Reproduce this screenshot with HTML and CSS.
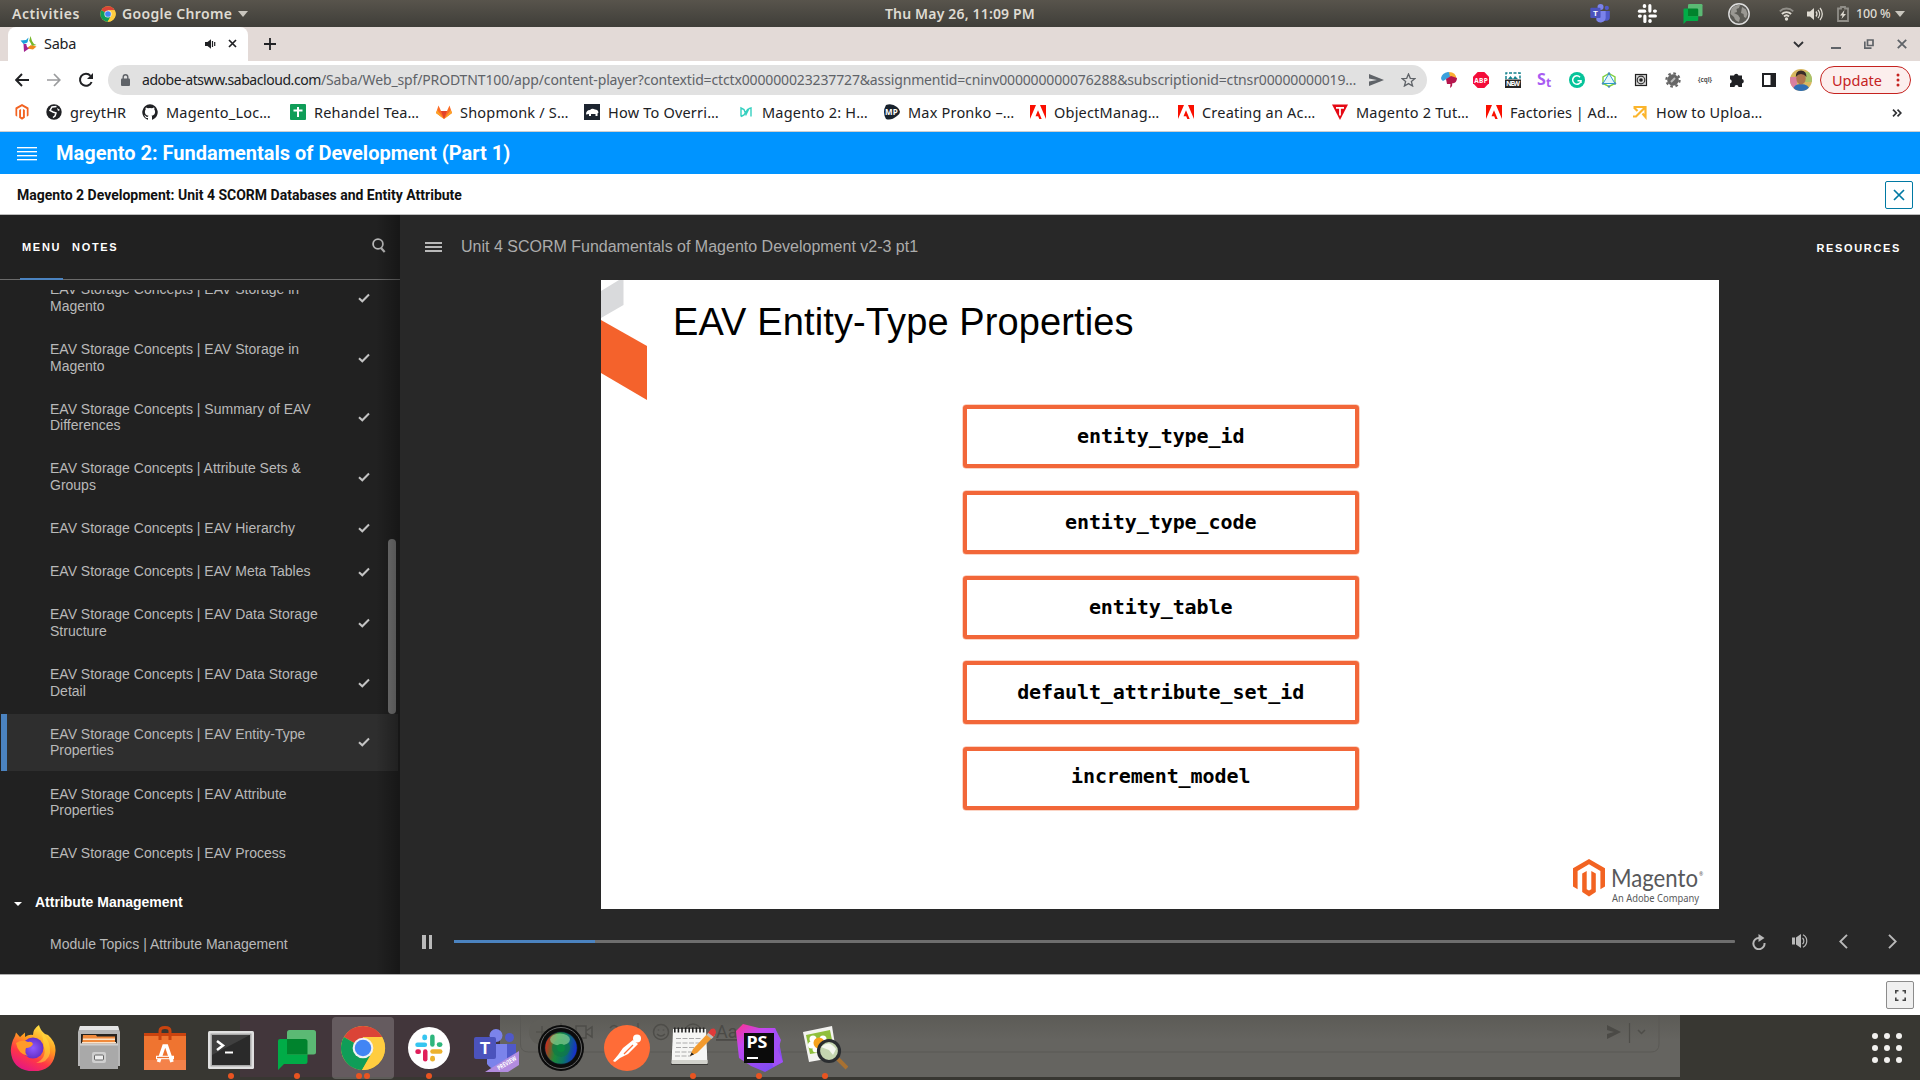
FILE: index.html
```html
<!DOCTYPE html>
<html lang="en">
<head>
<meta charset="utf-8">
<title>Saba</title>
<link rel="stylesheet" href="styles.css">
</head>
<body>
<svg class="defs" width="0" height="0">
  <symbol id="chrome" viewBox="0 0 48 48">
    <circle cx="24" cy="24" r="23" fill="#fc3"/>
    <path d="M24 24 4.100 12.500A23 23 0 0 1 44 12.500H24z" fill="#db4437"/>
    <path d="M24 24 4.100 12.500A23 23 0 0 0 23 47L33 29z" fill="#0f9d58"/>
    <path d="M24 12.500H44A23 23 0 0 1 23 47L34 29z" fill="#ffcd40"/>
    <circle cx="24" cy="24" r="10.800" fill="#f1f1f1"/>
    <circle cx="24" cy="24" r="8.600" fill="#4285f4"/>
  </symbol>
  <symbol id="magento" viewBox="0 0 32 38">
    <path d="M16 0 32 9.200V27.600L27.400 30.200V11.900L16 5.300 4.600 11.900V30.200L0 27.600V9.200z" fill="#f26322"/>
    <path d="M18.300 30.200 16 31.600 13.700 30.200V11.900L9.200 14.500V32.900L16 37.500 22.800 32.900V14.500L18.300 11.900z" fill="#f26322"/>
  </symbol>
  <symbol id="adobe" viewBox="0 0 16 16"><path d="M0 1h6L0 15zM16 1h-6l6 14zM8 6.200l3.700 8.800H9.300L8.200 12.200H5.500z" fill="#fa0f00"/></symbol>
  <symbol id="check" viewBox="0 0 12 10"><path d="M1 5.200 4.300 8.300 11 1.500" fill="none" stroke="#c4c4c4" stroke-width="2"/></symbol>
  <symbol id="slack" viewBox="0 0 24 24">
    <g class="sk-b"><rect x="1" y="7.500" width="9.500" height="3.600" rx="1.800"/><rect x="6.600" y="1.200" width="3.900" height="4.600" rx="1.900"/></g>
    <g class="sk-g"><rect x="12.900" y="1.200" width="3.600" height="9.800" rx="1.800"/><rect x="18.200" y="7.300" width="4.600" height="3.800" rx="1.900"/></g>
    <g class="sk-y"><rect x="13" y="13" width="9.800" height="3.600" rx="1.800"/><rect x="12.900" y="18.200" width="3.900" height="4.600" rx="1.900"/></g>
    <g class="sk-r"><rect x="7.200" y="13" width="3.600" height="9.800" rx="1.800"/><rect x="1" y="13" width="4.600" height="3.800" rx="1.900"/></g>
  </symbol>
  <symbol id="chat" viewBox="0 0 38 40">
    <path d="M2 9H27a2.500 2.500 0 0 1 2.500 2.500V31.500A2.500 2.500 0 0 1 27 34H6L0 40V11a2 2 0 0 1 2-2z" fill="#00ac47"/>
    <path d="M11.500 0H35.500A2.500 2.500 0 0 1 38 2.500V22a2.500 2.500 0 0 1-2.500 2.500H9V2.500A2.500 2.500 0 0 1 11.500 0z" fill="#5bb974"/>
    <path d="M9 9H27a2.500 2.500 0 0 1 2.500 2.500V24.500H9z" fill="#00832d"/>
  </symbol>
  <symbol id="teams" viewBox="0 0 46 43">
    <circle cx="22" cy="6.500" r="6.500" fill="#7b83eb"/><circle cx="35.500" cy="8.500" r="4.500" fill="#5059c9"/>
    <path d="M28 15H42V28a8 8 0 0 1-8 8H28z" fill="#5059c9"/>
    <path d="M13 15H33V30a11 11 0 0 1-20 5z" fill="#7b83eb"/>
    <rect y="8" width="22" height="22" rx="2" fill="#4b53bc"/>
    <text x="11" y="25" text-anchor="middle" class="teams-t">T</text>
  </symbol>
</svg>

<header class="topbar">
  <div class="top-left">
    <span class="activities">Activities</span>
    <svg width="16" height="16"><use href="#chrome"/></svg>
    <span class="appname">Google Chrome</span>
    <i class="caret"></i>
  </div>
  <span class="clock">Thu May 26, 11:09 PM</span>
  <div class="tray">
    <svg class="t-teams" width="22" height="20"><use href="#teams"/></svg>
    <svg class="mono t-slack" width="21" height="21"><use href="#slack"/></svg>
    <svg class="t-chat" width="20" height="20"><use href="#chat"/></svg>
    <svg class="t-globe" width="22" height="22" viewBox="0 0 22 22"><circle cx="11" cy="11" r="10.200" fill="#5b5a55" stroke="#dedede" stroke-width="1.400"/><path d="M3.500 5.500Q7 1.500 12 2L11 5 8.500 6 9 9 6 10 10 12 12 15 11 19Q7 18 6 14L2.500 11zM14 4l4 2.500 1.500 4.500-1.500 4-2-1-.5-3-2.500-1 .5-3z" fill="#9a9893"/></svg>
    <svg class="t-wifi" width="15" height="14" viewBox="0 0 15 14"><g fill="none" stroke-width="1.900"><path d="M.8 4.300a9.500 9.500 0 0 1 13.400 0" stroke="#908e88"/><path d="M2.900 7a6.500 6.500 0 0 1 9.200 0" stroke="#dfdbd2"/><path d="M5 9.500a3.600 3.600 0 0 1 5 0" stroke="#dfdbd2"/></g><circle cx="7.500" cy="12" r="1.700" fill="#dfdbd2"/></svg>
    <svg class="t-vol" width="16" height="14" viewBox="0 0 16 14"><path d="M0 4.500H3L7 1V13L3 9.500H0z" fill="#dfdbd2"/><path d="M9 4.500a4 4 0 0 1 0 5M11 2.800a6.500 6.500 0 0 1 0 8.400M13 1a9 9 0 0 1 0 12" fill="none" stroke="#dfdbd2" stroke-width="1.300"/></svg>
    <svg class="t-bat" width="12" height="16" viewBox="0 0 12 16"><path d="M4 1h4v1.500h3V15H1V2.500h3z" fill="none" stroke="#908e88" stroke-width="1.800"/><path d="M7.500 4 3 9.500H5.500L4.500 13 9 8H6.500z" fill="#dfdbd2"/></svg>
    <span class="pct">100 %</span>
    <i class="caret"></i>
  </div>
</header>

<div class="tabstrip">
  <div class="tab">
    <svg width="17" height="16" viewBox="0 0 17 16"><path d="M.5 4.500 6 4 8.500 1.500 7.500 6.500 3.500 8z" fill="#1b9fdb"/><path d="M10.500 0 12 5 14 8 16.500 9 12 10 9 5.500z" fill="#76b82a"/><path d="M16.500 10.500 13 13.500 7 12.500 10 9z" fill="#f08a1d"/><path d="M4 16 3.500 8 6.500 8 7 11 9 12.500z" fill="#a3238e"/><path d="M9.500 5 11.500 8.500 9 10.500 6.500 9.500 7 7z" fill="#fff"/></svg>
    <span class="tab-title">Saba</span>
    <svg class="tab-sound" width="11" height="10" viewBox="0 0 11 10"><path d="M0 3H2.500L6 .3V9.700L2.500 7H0z" fill="#202124"/><path d="M7.500 2v6M9.700 3v4" stroke="#202124" stroke-width="1.200"/></svg>
    <svg width="9" height="9" viewBox="0 0 9 9"><path d="M1 1l7 7M8 1 1 8" stroke="#202124" stroke-width="1.700"/></svg>
  </div>
  <svg class="newtab" width="12" height="12" viewBox="0 0 12 12"><path d="M6 0v12M0 6h12" stroke="#202124" stroke-width="1.800"/></svg>
  <div class="winctl">
    <svg width="11" height="7" viewBox="0 0 11 7"><path d="M1 1l4.500 4.500L10 1" fill="none" stroke="#303134" stroke-width="1.800"/></svg>
    <svg width="10" height="10" viewBox="0 0 10 10"><path d="M0 9h10" stroke="#5f6368" stroke-width="2"/></svg>
    <svg width="10" height="10" viewBox="0 0 10 10"><path d="M3.500 1H9v5.500H3.500zM.8 2.500v6.700H7.500" fill="none" stroke="#5f6368" stroke-width="1.700"/></svg>
    <svg width="10" height="10" viewBox="0 0 10 10"><path d="M.8.8l8.400 8.400M9.200.8.8 9.200" stroke="#5f6368" stroke-width="1.800"/></svg>
  </div>
</div>

<div class="toolbar">
  <svg class="nav" width="14" height="14" viewBox="0 0 14 14"><path d="M14 7H1.500M7 1 1.200 7 7 13" fill="none" stroke="#202124" stroke-width="1.900"/></svg>
  <svg class="nav" width="14" height="14" viewBox="0 0 14 14"><path d="M0 7h12.500M7 1l5.800 6L7 13" fill="none" stroke="#9a9b9d" stroke-width="1.700"/></svg>
  <svg class="nav reload" width="16" height="16" viewBox="0 0 16 16"><path d="M13.600 10A6 6 0 1 1 12.500 3.800" fill="none" stroke="#202124" stroke-width="2"/><path d="M15 1v6H9z" fill="#202124"/></svg>
  <div class="omnibox">
    <svg width="9" height="12" viewBox="0 0 9 12"><path d="M2.200 5V3a2.300 2.300 0 0 1 4.600 0v2" fill="none" stroke="#5f6368" stroke-width="1.400"/><rect y="4.500" width="9" height="7.500" rx="1" fill="#5f6368"/></svg>
    <span class="host">adobe-atsww.sabacloud.com</span><span class="path">/Saba/Web_spf/PRODTNT100/app/content-player?contextid=ctctx000000023237727&amp;assignmentid=cninv000000000076288&amp;subscriptionid=ctnsr00000000019…</span>
    <svg width="15" height="12" viewBox="0 0 15 12"><path d="M0 0 15 6 0 12V7.500L8 6 0 4.500z" fill="#5f6368"/></svg>
    <svg class="star" width="15" height="14" viewBox="0 0 15 14"><path d="M7.500 1 9.300 5.300 14 5.600 10.400 8.600 11.600 13 7.500 10.600 3.400 13 4.600 8.600 1 5.600 5.700 5.300z" fill="none" stroke="#5f6368" stroke-width="1.300"/></svg>
  </div>
  <div class="exts">
    <svg viewBox="0 0 16 16"><path d="M0 6Q1 1 7 0q3 0 2 5L2 9Q0 8 0 6z" fill="#3aa0dc"/><path d="M8 0q7 0 7.500 7L9 5z" fill="#fbb033"/><path d="M5 7l5-3 6 2q0 5-5 5.500Q12 14 9 16L9.500 12H6z" fill="#b5164e"/></svg>
    <svg viewBox="0 0 16 16"><path d="M4.700 0h6.600L16 4.700v6.600L11.300 16H4.700L0 11.300V4.700z" fill="#f40d3a"/><text x="8" y="10.700" text-anchor="middle" textLength="13.500" class="abp">ABP</text></svg>
    <svg viewBox="0 0 16 16"><path d="M1 7V1h14v6" fill="none" stroke="#13818d" stroke-width="1.500" stroke-dasharray="3 1.500"/><path d="M3 7l2.500-3L8 7l2-3 3 3z" fill="#13818d"/><rect y="7.500" width="16" height="8.500" fill="#262626"/><text x="8" y="14.300" text-anchor="middle" textLength="14" class="newx">NEW</text></svg>
    <svg viewBox="0 0 16 16"><text x="0" y="13" class="st1">S</text><text x="9" y="15" class="st2">t</text></svg>
    <svg viewBox="0 0 16 16"><circle cx="8" cy="8" r="8" fill="#07c39a"/><path d="M11 5.200A4.200 4.200 0 1 0 12 8.800H8.500M12 8.500v2.500" fill="none" stroke="#fff" stroke-width="1.500"/></svg>
    <svg viewBox="0 0 16 16"><path d="M8 1.500 14 5v6.500L8 14.500 2 11.500V5z" fill="none" stroke="#7fcf3f" stroke-width="1.400"/><path d="M8 1.500 14 11.500H2z" fill="#e3f4fb" stroke="#2b9bd0"/><g fill="#4a90b8"><circle cx="8" cy="1.500" r="1.200"/><circle cx="14" cy="11.500" r="1.200"/><circle cx="2" cy="11.500" r="1.200"/><circle cx="8" cy="14.600" r="1.200"/></g></svg>
    <svg viewBox="0 0 16 16"><rect x="2.500" y="2.500" width="11" height="11" fill="#d8d8d8" stroke="#222" stroke-width="1.200"/><circle cx="8" cy="8" r="3.800" fill="none" stroke="#333" stroke-width="1.200"/><circle cx="8" cy="8" r="1.800" fill="#222"/></svg>
    <svg viewBox="0 0 16 16"><circle cx="8" cy="8" r="6.600" fill="none" stroke="#666" stroke-width="2.200" stroke-dasharray="2.600 2.600"/><circle cx="8" cy="8" r="5.800" fill="#666"/><path d="M6 10l4-4" stroke="#bbb" stroke-width="2"/></svg>
    <svg viewBox="0 0 16 16"><text x="8" y="10.300" text-anchor="middle" textLength="14" lengthAdjust="spacingAndGlyphs" class="cql">{cql}</text></svg>
    <svg viewBox="0 0 16 16"><path d="M1 3.500H5a2.300 2.300 0 0 1 4.500 0H13V7a2.300 2.300 0 0 1 0 4.500V15H9.500a2 2 0 0 0-4 0H1V11.500a2.200 2.200 0 0 0 0-4.300z" fill="#202124"/></svg>
    <svg viewBox="0 0 16 16"><path d="M2 2h12v12H2z" fill="none" stroke="#202124" stroke-width="2"/><path d="M9.500 2H14v12H9.500z" fill="#202124"/></svg>
  </div>
  <svg class="avatar" width="22" height="22" viewBox="0 0 22 22"><clipPath id="av"><circle cx="11" cy="11" r="11"/></clipPath><g clip-path="url(#av)"><rect width="22" height="22" fill="#d8b860"/><path d="M0 8h7v14H0z" fill="#d97fa0"/><path d="M14 3h8v10h-8z" fill="#a8c26a"/><path d="M3 22q0-7 8-7t9 7z" fill="#2f6fb5"/><ellipse cx="11" cy="9.500" rx="4.700" ry="6" fill="#b0764e"/><path d="M5.800 8Q5.500 1.500 11 1.500T16.500 8Q14 5 11 5T5.800 8z" fill="#3a2c28"/></g></svg>
  <div class="update">Update<svg width="4" height="14" viewBox="0 0 4 14"><g fill="#c5221f"><circle cx="2" cy="2" r="1.500"/><circle cx="2" cy="7" r="1.500"/><circle cx="2" cy="12" r="1.500"/></g></svg></div>
</div>

<nav class="bookmarks">
  <a class="bm b-mg"><svg viewBox="0 0 32 38"><use href="#magento"/></svg></a>
  <a class="bm b1"><svg viewBox="0 0 16 16"><circle cx="8" cy="8" r="7.700" fill="#202124"/><path d="M10.500 2.500 6 3 4 6.500 7 8l3 1-1 3-2 1.500" fill="none" stroke="#fff" stroke-width="1.500"/><path d="M11 4l3 2-2 1z" fill="#fff"/></svg>greytHR</a>
  <a class="bm b2"><svg viewBox="0 0 16 16"><path d="M8 .2a8 8 0 0 0-2.500 15.500c.4.100.5-.2.500-.4v-1.400c-2.200.5-2.700-1-2.700-1-.4-.9-.9-1.200-.9-1.200-.7-.5.100-.5.100-.5.800.100 1.200.8 1.200.8.700 1.200 1.900.9 2.300.7.100-.5.300-.9.500-1.100-1.800-.2-3.600-.9-3.600-3.900 0-.9.300-1.600.8-2.100-.1-.2-.4-1 .1-2.100 0 0 .7-.2 2.200.8a7.500 7.500 0 0 1 4 0c1.500-1 2.200-.8 2.200-.8.400 1.100.200 1.900.100 2.100.5.500.8 1.200.8 2.100 0 3-1.800 3.700-3.600 3.900.3.300.500.800.500 1.500v2.200c0 .200.100.500.500.400A8 8 0 0 0 8 .2z" fill="#202124"/></svg>Magento_Loc…</a>
  <a class="bm b3"><svg viewBox="0 0 16 16"><rect width="16" height="16" rx="1" fill="#0f9d58"/><path d="M8 3v10M3.500 6.500h9" stroke="#fff" stroke-width="2"/></svg>Rehandel Tea…</a>
  <a class="bm b4"><svg viewBox="0 0 16 16"><path d="M8 15 0 9 2.500 1.500 5 7h6l2.500-5.500L16 9z" fill="#fc6d26"/><path d="M8 15 5 7h6z" fill="#e24329"/><path d="M0 9 1.200 6 8 15zM16 9l-1.200-3L8 15z" fill="#fca326"/></svg>Shopmonk / S…</a>
  <a class="bm b5"><svg viewBox="0 0 16 16"><rect width="16" height="16" fill="#1d2530"/><path d="M2 10.500Q2 6 6 6q2-2 5-.5 3 0 3.500 3l-1 1V12h-2V10H7v2H5V10z" fill="#fff"/></svg>How To Overri…</a>
  <a class="bm b6"><svg viewBox="0 0 16 16"><path d="M3 12.500V4l3 1.500 2 5 3-6L13 4v8.500M3 12.500 6 11 10 5" fill="none" stroke="#35d0c0" stroke-width="1.400"/></svg>Magento 2: H…</a>
  <a class="bm b7"><svg viewBox="0 0 16 16"><path d="M2 1Q8-1 13 3q6 5 0 9-6 5-11 3-4-7 0-14z" fill="#18222d"/><text x="7.500" y="11" text-anchor="middle" class="mp">MP</text></svg>Max Pronko –…</a>
  <a class="bm b8"><svg viewBox="0 0 16 16"><use href="#adobe"/></svg>ObjectManag…</a>
  <a class="bm b9"><svg viewBox="0 0 16 16"><use href="#adobe"/></svg>Creating an Ac…</a>
  <a class="bm b10"><svg viewBox="0 0 16 16"><path d="M0 .5h16L8 16z" fill="#e50914"/><path d="M4 3.800h8M8 4v7.500" stroke="#fff" stroke-width="1.800"/></svg>Magento 2 Tut…</a>
  <a class="bm b11"><svg viewBox="0 0 16 16"><use href="#adobe"/></svg>Factories | Ad…</a>
  <a class="bm b12"><svg viewBox="0 0 16 16"><path d="M1.500 3H13.500V13L10.500 9.500M13 3.500 4 12.500H1M2 3.500 5.500 7" fill="none" stroke="#fbb52c" stroke-width="2.200"/></svg>How to Uploa…</a>
  <svg class="more" width="10" height="8" viewBox="0 0 10 8"><path d="M1 .7 4.300 4 1 7.300M5.500.7 8.800 4 5.500 7.300" fill="none" stroke="#303134" stroke-width="1.700"/></svg>
</nav>

<div class="coursebar">
  <div class="burger4"><i></i><i></i><i></i><i></i></div>
  <h1>Magento 2: Fundamentals of Development (Part 1)</h1>
</div>
<div class="unitbar">
  <h2>Magento 2 Development: Unit 4 SCORM Databases and Entity Attribute</h2>
  <button class="close"><svg width="12" height="12" viewBox="0 0 12 12"><path d="M1 1l10 10M11 1 1 11" stroke="#0079a3" stroke-width="1.700"/></svg></button>
</div>

<main class="player">
  <aside class="sidebar">
    <div class="side-tabs">
      <span class="stab active">MENU</span><span class="stab">NOTES</span>
      <svg width="14" height="15" viewBox="0 0 14 15"><circle cx="6" cy="6" r="4.900" fill="none" stroke="#b9b9b9" stroke-width="1.800"/><path d="M9 10l3.700 4" stroke="#b9b9b9" stroke-width="2.200"/></svg>
    </div>
    <div class="outline">
      <ul>
        <li><span>EAV Storage Concepts | EAV Storage in<br>Magento</span><svg><use href="#check"/></svg></li>
        <li><span>EAV Storage Concepts | EAV Storage in<br>Magento</span><svg><use href="#check"/></svg></li>
        <li><span>EAV Storage Concepts | Summary of EAV<br>Differences</span><svg><use href="#check"/></svg></li>
        <li><span>EAV Storage Concepts | Attribute Sets &amp;<br>Groups</span><svg><use href="#check"/></svg></li>
        <li><span>EAV Storage Concepts | EAV Hierarchy</span><svg><use href="#check"/></svg></li>
        <li><span>EAV Storage Concepts | EAV Meta Tables</span><svg><use href="#check"/></svg></li>
        <li><span>EAV Storage Concepts | EAV Data Storage<br>Structure</span><svg><use href="#check"/></svg></li>
        <li><span>EAV Storage Concepts | EAV Data Storage<br>Detail</span><svg><use href="#check"/></svg></li>
        <li class="current"><span>EAV Storage Concepts | EAV Entity-Type<br>Properties</span><svg><use href="#check"/></svg></li>
        <li><span>EAV Storage Concepts | EAV Attribute<br>Properties</span></li>
        <li><span>EAV Storage Concepts | EAV Process</span></li>
        <li class="section"><i></i><span>Attribute Management</span></li>
        <li><span>Module Topics | Attribute Management</span></li>
      </ul>
      <div class="thumb"></div>
    </div>
    <div class="edge"></div>
  </aside>
  <section class="stage">
    <div class="stage-head">
      <div class="burger3"><i></i><i></i><i></i></div>
      <span class="stage-title">Unit 4 SCORM Fundamentals of Magento Development v2-3 pt1</span>
      <span class="resources">RESOURCES</span>
    </div>
    <div class="slide">
      <svg class="decor" width="48" height="122" viewBox="0 0 48 122"><path d="M18 0H22.500V25L0 38V11z" fill="#d9dadc"/><path d="M0 40 46 66V120L0 93z" fill="#f4622c"/></svg>
      <h3>EAV Entity-Type Properties</h3>
      <div class="boxes">
        <div>entity_type_id</div>
        <div>entity_type_code</div>
        <div>entity_table</div>
        <div>default_attribute_set_id</div>
        <div class="last">increment_model</div>
      </div>
      <svg class="logo" width="132" height="48" viewBox="0 0 132 48"><use href="#magento" width="32" height="38"/><g fill="#58595b"><text x="38" y="28" textLength="87" lengthAdjust="spacingAndGlyphs" class="lg1">Magento</text><text x="126" y="17" class="lg3">®</text><text x="39" y="43" textLength="87" lengthAdjust="spacingAndGlyphs" class="lg2">An Adobe Company</text></g></svg>
    </div>
    <div class="controls">
      <div class="pause"><i></i><i></i></div>
      <div class="seek"><div class="played"></div></div>
      <svg class="c-replay" width="14" height="16" viewBox="0 0 14 16"><path d="M12.500 9A5.600 5.600 0 1 1 7 4" fill="none" stroke="#b9b9b9" stroke-width="2"/><path d="M6.500 0 12.500 4 6.500 8z" fill="#b9b9b9"/></svg>
      <svg class="c-vol" width="17" height="14" viewBox="0 0 17 14"><path d="M0 3.500H3v7H0zM4 3.500 9 0V14L4 10.500z" fill="#b9b9b9"/><path d="M10.500 4a4 4 0 0 1 0 6M11 .8a7 7 0 0 1 0 12.400" fill="none" stroke="#b9b9b9" stroke-width="1.200"/></svg>
      <svg class="c-prev" width="9" height="15" viewBox="0 0 9 15"><path d="M8 .8 1.300 7.500 8 14.200" fill="none" stroke="#b9b9b9" stroke-width="1.900"/></svg>
      <svg class="c-next" width="9" height="15" viewBox="0 0 9 15"><path d="M1 .8l6.700 6.700L1 14.200" fill="none" stroke="#b9b9b9" stroke-width="1.900"/></svg>
    </div>
  </section>
</main>

<div class="footer"><button class="full"><svg width="11" height="11" viewBox="0 0 11 11"><path d="M.8 3.500V.8H3.500M7.500.8h2.700v2.700M10.200 7.500v2.700H7.500M3.500 10.200H.8V7.500" fill="none" stroke="#444" stroke-width="1.600"/></svg></button></div>

<footer class="dock">
  <div class="backdrop"><i class="bk1"></i><i class="bk2"></i>
    <svg class="compose" width="1180" height="62" viewBox="0 0 1180 62"><g fill="none" stroke="#4e4d49" stroke-width="1.500"><path d="M20.500 0V29q0 8 8 8H1151q8 0 8-8V0" stroke="#5a5955" stroke-width="1"/><circle cx="42" cy="17" r="13" fill="#5f5e59" stroke="none"/><path d="M42 11v12M36 17h12M61 8v20M138 8v20M1129.500 8v20" stroke-width="1.200"/><path d="M76 11h10v12H76zM86 16l6-4v10l-6-4M110 13q4-5 8 0v8"/><circle cx="161" cy="17" r="7.500"/><path d="M157 19q4 4 8 0M158.500 14.500v1M163.500 14.500v1"/><circle cx="193" cy="17" r="8"/><path d="M1138 15l3.500 3.500L1145 15"/></g><path d="M1107 10 1121 17 1107 24V19L1114 17 1107 15z" fill="#4b4a46"/><text x="216" y="23" class="aa">Aa</text></svg>
  </div>
  <div class="apps">
    <div class="app"><svg width="46" height="46" viewBox="0 0 46 46"><defs><linearGradient id="ff" x1=".8" y1="0" x2=".3" y2="1"><stop offset="0" stop-color="#fff44f"/><stop offset=".4" stop-color="#ff9a1f"/><stop offset=".7" stop-color="#ff3647"/><stop offset="1" stop-color="#e31587"/></linearGradient><radialGradient id="fg"><stop offset="0" stop-color="#9059ff"/><stop offset="1" stop-color="#6532c8"/></radialGradient></defs><path d="M5 11 6 7.500 10 12 15 7.500 15 12Q19 9 23 10 23 4 29 0 30 5 35 9L38 10Q46 17 45.500 26 44 46 23 46.500 2 45 .8 26 1 18 5 11z" fill="url(#ff)"/><path d="M32 8Q41 16 40 28 38 38 26 38 37 33 34 22z" fill="#ffdf3a" opacity=".55"/><circle cx="23" cy="23" r="10.500" fill="url(#fg)"/><path d="M6 18Q12 14 18 17 22 16 23 19 21 23 16 23 14 28 18 31 8 29 6 18z" fill="#ff9a28"/></svg></div>
    <div class="app"><svg width="42" height="44" viewBox="0 0 42 44"><path d="M2 0H40L42 6V40H0V6z" fill="#b6b6b6"/><path d="M2 0H40L41 4H1z" fill="#e4e4e4"/><rect x="3" y="8" width="36" height="11" fill="#26231f"/><path d="M5 9H18l1 1.500H37V20H4z" fill="#f08a3c"/><path d="M5 12.500H37v1.500H5zM4 16H38v1.500H4z" fill="#fbe3c8"/><path d="M2 17.500H40V43H2z" fill="#a9a9a9"/><path d="M2 17.500H40v2H2z" fill="#cfcfcf"/><rect x="14" y="26" width="14" height="11" rx="2" fill="#cfcfcf"/><rect x="16.500" y="29" width="9" height="5" rx="1" fill="#eee" stroke="#666"/></svg></div>
    <div class="app"><svg width="42" height="44" viewBox="0 0 42 44"><path d="M0 7H42V12H0z" fill="#c9430f"/><path d="M0 10H42V44H0z" fill="#ef7430"/><path d="M0 34H42V44H0z" fill="#f4824a"/><path d="M16 14V5q0-3.500 5-3.500T26 5v9" fill="none" stroke="#c9430f" stroke-width="3"/><path d="M14.500 36 20 20h2.500L28 36M12 31.500H30" fill="none" stroke="#fff" stroke-width="3.600"/><path d="M13 31.500H25" stroke="#ef7430" stroke-width="1.300"/></svg></div>
    <div class="app"><svg class="down" width="46" height="38" viewBox="0 0 46 38"><rect width="46" height="38" rx="1.500" fill="#e0e0e0"/><rect x="2.500" y="2.500" width="41" height="33" fill="#a9a9a9"/><rect x="4" y="4" width="38" height="30" fill="#2a2a2a"/><path d="M4 4H42L4 24z" fill="#3f3f3f"/><path d="M9 10l6 4.500L9 19" fill="none" stroke="#fff" stroke-width="2.500"/><path d="M17 21.500h8" stroke="#fff" stroke-width="2"/></svg><i class="dot"></i></div>
    <div class="app"><svg class="down" width="38" height="40" viewBox="0 0 38 40"><use href="#chat"/></svg><i class="dot"></i></div>
    <div class="app on"><svg width="46" height="46"><use href="#chrome"/></svg><i class="dot two"></i></div>
    <div class="app"><svg width="42" height="42" viewBox="0 0 42 42"><circle cx="21" cy="21" r="21" fill="#fff"/><use href="#slack" x="6" y="6" width="30" height="30"/></svg><i class="dot"></i></div>
    <div class="app"><svg class="tm" width="46" height="43" viewBox="0 0 46 43"><use href="#teams"/><path d="M11 43 45 22V36L34 43z" fill="#b28ce0"/><text transform="translate(25 41.500) rotate(-31)" textLength="21" lengthAdjust="spacingAndGlyphs" class="prev">PREVIEW</text></svg></div>
    <div class="app"><svg width="46" height="46" viewBox="0 0 46 46"><defs><linearGradient id="ln" x1="0" y1=".4" x2="1" y2=".6"><stop offset="0" stop-color="#d02a1c"/><stop offset=".35" stop-color="#1d8a3a"/><stop offset=".65" stop-color="#0c7468"/><stop offset="1" stop-color="#1828d8"/></linearGradient></defs><circle cx="23" cy="23" r="23" fill="#0c0c0c"/><circle cx="23" cy="23" r="20.500" fill="none" stroke="#666" stroke-width="1"/><circle cx="23" cy="23" r="16.500" fill="#123"/><circle cx="23" cy="23" r="15.800" fill="url(#ln)"/><circle cx="23" cy="23" r="9" fill="#0f7a45" opacity=".7"/><ellipse cx="22" cy="14.500" rx="10" ry="6" fill="#9adf9c" opacity=".6"/><circle cx="23" cy="23" r="4" fill="#0b8a42"/></svg></div>
    <div class="app"><svg width="46" height="46" viewBox="0 0 46 46"><circle cx="23" cy="23" r="23" fill="#ff6c37"/><circle cx="33" cy="13.500" r="4" fill="#fff"/><path d="M29 15 34 19 24 29 16 33 11 37 9 36 14 30 19 23z" fill="#fff"/><path d="M20 29l9-9" stroke="#ff6c37" stroke-width="1.200"/></svg></div>
    <div class="app"><svg width="46" height="46" viewBox="0 0 46 46"><path d="M3 5H36L38 40H1z" fill="#3c3b38"/><path d="M3 4H36L37.500 38H1.500z" fill="#f6f6f4"/><path d="M2 35H37.500V39H1.500z" fill="#d2d2cc"/><path d="M4 5H36" stroke="#222" stroke-width="5" stroke-dasharray="1.600 2"/><path d="M6 13.500H31M6 18H30M6 22.500H27M5 27H24M5 31H21" stroke="#a9a9a9" stroke-width="1.200" stroke-dasharray="5 1.500"/><path d="M20 31 23 24 40 6 45 10 27 28z" fill="#f39a2d"/><path d="M38 8 41 4q5-2 5 4l-2.500 4z" fill="#e03a3a"/><path d="M36.500 10 38.500 8 43.500 12 41.500 14z" fill="#bcbcbc"/><path d="M20 31l1.500-3.500 2.500 2z" fill="#222"/></svg><i class="dot"></i></div>
    <div class="app"><svg width="48" height="48" viewBox="0 0 48 48"><defs><linearGradient id="ps" x1="0" y1="0" x2=".7" y2="1"><stop offset="0" stop-color="#ff318c"/><stop offset=".35" stop-color="#c247f0"/><stop offset="1" stop-color="#7b4df5"/></linearGradient></defs><path d="M1 7 8 0 24 4 40 4 44 18 48 38 30 48 16 42 4 34z" fill="url(#ps)"/><path d="M40 4 46 16 43 26 48 38 38 43 34 20z" fill="#a14ff5"/><rect x="9" y="9" width="30" height="30" fill="#0b0b0b"/><text x="11.500" y="24" textLength="21" lengthAdjust="spacingAndGlyphs" class="pst">PS</text><path d="M12 34h11" stroke="#fff" stroke-width="2"/></svg><i class="dot"></i></div>
    <div class="app"><svg width="46" height="46" viewBox="0 0 46 46"><path d="M1 7 30 1 35 32 7 37z" fill="#f3f3f0"/><path d="M4 10 28 5 32 25 8 29z" fill="#8fbf3c"/><g fill="#fff"><circle cx="11" cy="14" r="3.500"/><circle cx="9.500" cy="20" r="3.500"/><circle cx="14" cy="24" r="3.500"/><circle cx="21" cy="14" r="3.500"/></g><circle cx="17" cy="18" r="5.500" fill="#f6a11c"/><path d="M35 33 45 43" stroke="#a87132" stroke-width="4"/><circle cx="27" cy="26" r="10.500" fill="#c5d6b0" stroke="#2a2d30" stroke-width="3.200"/><path d="M19 22q8-8 15 2l-3 6-4-5z" fill="#f3f6ee"/></svg><i class="dot"></i></div>
  </div>
  <div class="grid"><i></i><i></i><i></i><i></i><i></i><i></i><i></i><i></i><i></i></div>
</footer>
</body>
</html>
```
FILE: styles.css
```css
* { box-sizing: border-box; }
body { margin: 0; width: 1920px; height: 1080px; overflow: hidden; display: flex; flex-direction: column; background: #fff; font-family: "Noto Sans", sans-serif; font-size: 14.5px; color: #202124; }
h1, h2, h3, ul { margin: 0; padding: 0; }
svg { display: block; flex: none; }
.defs { position: absolute; }
span, a, h1, h2, h3 { white-space: nowrap; }

/* desktop panel */
.topbar { height: 27px; flex: none; display: grid; grid-template-columns: 1fr auto 1fr; align-items: center; background: linear-gradient(#58544c, #3f3e39); color: #dfdbd2; font-weight: 600; font-size: 14px; line-height: 26px; }
.top-left { display: flex; align-items: center; padding-left: 12px; }
.activities { width: 88px; letter-spacing: .55px; }
.appname { margin-left: 6px; width: 116px; letter-spacing: .33px; }
.caret { border: 5px solid transparent; border-top: 6px solid #c9c6be; border-bottom: 0; }
.clock { letter-spacing: .17px; }
.tray { display: flex; align-items: center; justify-content: flex-end; padding-right: 15px; }
.t-slack { margin-left: 25px; }
.t-chat { margin-left: 25px; }
.t-globe { margin-left: 25px; }
.t-wifi { margin-left: 29px; }
.t-vol { margin-left: 13px; }
.t-bat { margin-left: 14px; }
.pct { font-size: 12.5px; font-weight: 500; width: 39px; margin-left: 7px; letter-spacing: -.2px; }

/* browser tabs */
.tabstrip { height: 34px; flex: none; background: #e3dad7; display: flex; align-items: center; padding-left: 8px; }
.tab { width: 240px; height: 34px; background: #fff; border-radius: 8px 8px 0 0; display: flex; align-items: center; padding: 0 11px 1px 12px; }
.tab-title { margin-left: 7px; letter-spacing: -.25px; margin-top: -1px; }
.tab-sound { margin-left: auto; margin-right: 12px; }
.newtab { margin-left: 16px; }
.winctl { margin-left: auto; display: flex; align-items: center; gap: 23px; padding-right: 13px; }
.winctl svg:first-child { margin-right: 4px; }

/* address row */
.toolbar { height: 38px; flex: none; display: flex; align-items: center; padding-left: 15px; }
.nav { margin-right: 18px; }
.reload { margin-right: 14px; margin-left: -1px; }
.omnibox { width: 1319px; height: 30px; border-radius: 15px; background: #e1e1e1; display: flex; align-items: center; padding: 0 11px 0 13px; font-size: 14px; }
.host { margin-left: 12px; width: 179px; letter-spacing: -.44px; line-height: 28px; margin-top: -1px; }
.path { width: 1048px; color: #5f6368; letter-spacing: -.14px; line-height: 28px; margin-top: -1px; }
.star { margin-left: auto; }
.exts { display: flex; gap: 16px; margin-left: 14px; }
.exts svg { width: 16px; height: 16px; }
.abp { font: 700 6.500px "Noto Sans", sans-serif; fill: #fff; }
.newx { font: 700 7px "Noto Sans", sans-serif; fill: #fff; }
.st1 { font: 700 16px "Noto Sans", sans-serif; fill: #a95cf2; }
.st2 { font: 700 12px "Noto Sans", sans-serif; fill: #a95cf2; }
.cql { font: 700 7px "Noto Sans", sans-serif; fill: #555; }
.mp { font: 700 8px "Noto Sans", sans-serif; fill: #fff; }
.avatar { margin-left: 13px; }
.update { margin-left: 8px; width: 91px; height: 28px; border: 1px solid #c5221f; border-radius: 14px; background: #fceeed; color: #c5221f; display: flex; align-items: center; justify-content: space-between; padding: 0 10px 1px 11px; }

/* bookmarks */
.bookmarks { height: 33px; flex: none; display: flex; align-items: center; padding: 0 18px 6px 14px; border-bottom: 1px solid #cfcfcf; letter-spacing: .2px; }
.bm { display: flex; align-items: center; gap: 8px; flex: none; width: 146px; }
.bm svg { width: 16px; height: 16px; }
.b-mg { width: 32px; }
.b1 { width: 96px; }
.b2, .b4 { width: 148px; }
.b5 { width: 154px; }
.b8 { width: 148px; }
.b7 { width: 146px; }
.b9, .b10 { width: 154px; }
.b11 { letter-spacing: .05px; }
.more { margin-left: auto; margin-top: 2px; }

/* course heading */
.coursebar { height: 42px; flex: none; background: #0094ff; display: flex; align-items: center; padding-left: 17px; }
.burger4 { width: 20px; display: flex; flex-direction: column; gap: 3px; margin-right: 19px; margin-top: 1px; }
.burger4 i { height: 1px; background: #fff; box-shadow: 0 1px rgba(255,255,255,.35); }
h1 { font: 700 20px Roboto, sans-serif; color: #fff; }
.unitbar { height: 41px; flex: none; display: flex; align-items: center; justify-content: space-between; padding: 2px 7px 0 17px; border-bottom: 1px solid #bdbdbd; }
h2 { font: 700 14px Roboto, sans-serif; color: #111; }
button { padding: 0; display: flex; align-items: center; justify-content: center; }
.close { width: 28px; height: 28px; border: 1px solid #0079a3; border-radius: 2px; background: #fff; }

/* player */
.player { height: 759px; flex: none; display: flex; font-family: "Liberation Sans", sans-serif; }
.sidebar { width: 400px; background: #212121; position: relative; display: flex; flex-direction: column; }
.edge { position: absolute; right: 0; top: 0; bottom: 0; width: 24px; background: linear-gradient(90deg, rgba(0,0,0,0), rgba(0,0,0,.32)); }
.side-tabs { height: 65px; flex: none; display: flex; border-bottom: 1px solid #6b6b6b; padding: 0 14px 0 20px; }
.side-tabs svg { margin: 23px 0 0 auto; }
.stab { font-size: 11px; font-weight: 700; letter-spacing: 1.7px; color: #fff; line-height: 64px; height: 65px; padding: 0 0 0 2px; margin-right: 7px; }
.active { border-bottom: 2px solid #4b83c0; width: 43px; }
.outline { flex: 1; margin-top: 10px; overflow: hidden; position: relative; }
.outline ul { list-style: none; margin-top: -22px; display: flex; flex-direction: column; }
.outline li { display: flex; align-items: center; justify-content: space-between; padding: 11.770px 30px 11.770px 50px; margin: 1.500px 2px 1.500px 0; font-size: 14px; line-height: 16.600px; color: #b9b9b9; }
.outline li svg { width: 12px; height: 10px; margin-right: -2px; }
.outline .current { background: #2e2e2e; box-shadow: inset 1px 0 #212121, inset 7px 0 #4b83c0; }
.outline .section { padding: 17.500px 0 11px 14px; justify-content: flex-start; color: #fff; font-weight: 700; }
.section i { border: 4px solid transparent; border-top-color: #fff; border-bottom: 0; margin-right: 13px; margin-top: 3px; }
.thumb { position: absolute; left: 388px; top: 249px; width: 8px; height: 175px; border-radius: 4px; background: #767676; }
.stage { flex: 1; background: #282828; display: flex; flex-direction: column; }
.stage-head { height: 65px; display: flex; align-items: center; padding: 0 19px 0 25px; }
.burger3 { width: 17px; display: flex; flex-direction: column; gap: 2px; margin-right: 19px; margin-top: -1px; }
.burger3 i { height: 2px; background: #b9b9b9; }
.stage-title { font-size: 16px; color: #acacac; margin-top: -2px; }
.resources { margin-left: auto; margin-top: 1px; font-size: 11px; font-weight: 700; color: #fff; letter-spacing: 1.650px; }
.slide { width: 1118px; height: 629px; margin-left: 201px; background: #fff; color: #000; position: relative; padding: 20px 0 0 72px; }
.decor { position: absolute; left: 0; top: 0; }
h3 { font-weight: 400; font-size: 38px; line-height: 44px; letter-spacing: .12px; }
.boxes { display: flex; flex-direction: column; gap: 22.400px; margin: 61.200px 0 0 289.700px; width: 396px; }
.boxes div { height: 63px; border: 4.500px solid #f26739; border-radius: 3px; font: 700 20px/55px "DejaVu Sans Mono", monospace; letter-spacing: -.08px; text-align: center; box-shadow: 0 0 0 .5px #f7a98c; }
.boxes .last { line-height: 51px; }
.logo { position: absolute; right: 14px; bottom: 2px; }
.lg1 { font: 400 25px Lato, sans-serif; }
.lg2 { font: 11.500px "Noto Sans", sans-serif; }
.lg3 { font: 5px "Noto Sans", sans-serif; }
.controls { flex: 1; display: flex; align-items: center; padding-left: 22px; }
.pause { display: flex; gap: 3px; width: 32px; }
.pause i { width: 3.500px; height: 14px; background: #b9b9b9; }
.seek { width: 1281px; height: 3px; background: #6e6e6e; border-radius: 1px; }
.played { width: 141px; height: 3px; background: #4b83c0; }
.c-replay { margin-left: 17px; }
.c-vol { margin-left: 26px; margin-top: -2px; }
.c-prev { margin-left: 30px; }
.c-next { margin-left: 40px; }
.footer { height: 41px; flex: none; border-top: 1px solid #adadad; display: flex; justify-content: flex-end; padding: 6px 6px 0 0; }
.full { width: 28px; height: 28px; background: #f0f0f0; border: 1px solid #8c8c8c; border-radius: 2px; }

/* dock */
.dock { flex: 1; background: #383732; position: relative; display: flex; justify-content: space-between; align-items: flex-start; }
.backdrop { position: absolute; inset: 0; display: flex; padding-left: 240px; }
.bk1 { width: 260px; height: 62px; background: #42363b; }
.bk2 { width: 1180px; height: 62px; background: linear-gradient(#5c5b56, #656460 40%); }
.compose { position: absolute; left: 500px; top: 0; }
.aa { font: 18px Roboto, sans-serif; fill: #4b4a46; text-decoration: underline; }
.apps { display: flex; position: relative; }
.app { width: 66px; height: 65px; display: flex; align-items: center; justify-content: center; position: relative; }
.app .down { margin-top: 5px; }
.app .tm { margin: 6px 0 0 3px; }
.on::before { content: ""; position: absolute; left: 2px; top: 2px; width: 62px; height: 62px; border-radius: 4px; background: rgba(255,255,255,.19); }
.on svg { position: relative; }
.dot { position: absolute; left: 30px; bottom: 1px; width: 6px; height: 6px; border-radius: 50%; background: #e95420; }
.two { left: 26px; box-shadow: 8px 0 #e95420; }
.grid { position: relative; display: grid; grid-template-columns: repeat(3, 6px); gap: 6px; margin: 18px 18px 0 0; }
.grid i { width: 6px; height: 6px; border-radius: 50%; background: #f2f1ef; }
.sk-b { fill: #36c5f0; } .sk-g { fill: #2eb67d; } .sk-y { fill: #ecb22e; } .sk-r { fill: #e01e5a; }
.mono { filter: brightness(0) invert(1); }
.teams-t { font: 700 17px Roboto, sans-serif; fill: #fff; }
.prev { font: 700 6.500px "Noto Sans", sans-serif; fill: #fff; }
.pst { font: 700 16px "Noto Sans", sans-serif; fill: #fff; }
```
